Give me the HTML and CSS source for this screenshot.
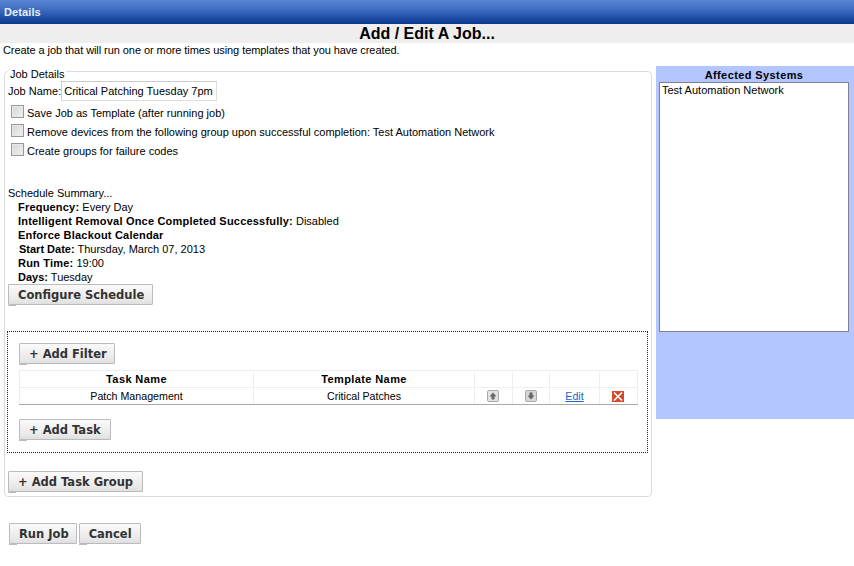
FILE: index.html
```html
<!DOCTYPE html>
<html lang="en">
<head>
<meta charset="utf-8">
<title>Add / Edit A Job</title>
<link rel="stylesheet" href="styles.css">
</head>
<body>
<header class="topbar">Details</header>
<h1 class="title">Add / Edit A Job...</h1>
<p class="intro">Create a job that will run one or more times using templates that you have created.</p>
<div class="columns">
  <main class="main">
    <fieldset class="details">
      <legend><span class="legend-text">Job Details</span></legend>
      <div class="name-row"><label>Job Name:</label><input class="name-input" type="text" value="Critical Patching Tuesday 7pm"></div>
      <div class="check-row"><span class="check"></span>Save Job as Template (after running job)</div>
      <div class="check-row"><span class="check"></span>Remove devices from the following group upon successful completion: Test Automation Network</div>
      <div class="check-row"><span class="check"></span>Create groups for failure codes</div>
      <div class="summary-title">Schedule Summary...</div>
      <div class="summary">
        <div><b>Frequency:</b> Every Day</div>
        <div><b>Intelligent Removal Once Completed Successfully:</b> Disabled</div>
        <div><b>Enforce Blackout Calendar</b></div>
        <div class="nudge tight"><b>Start Date:</b> Thursday, March 07, 2013</div>
        <div><b>Run Time:</b> 19:00</div>
        <div class="tight"><b>Days:</b> Tuesday</div>
      </div>
      <button class="btn" type="button">Configure Schedule</button>
      <section class="tasks">
        <button class="btn btn-filter" type="button">+ Add Filter</button>
        <table class="grid">
          <thead>
            <tr><th class="c1">Task Name</th><th class="c2">Template Name</th><th class="c3"></th><th class="c4"></th><th class="c5"></th><th class="c6"></th></tr>
          </thead>
          <tbody>
            <tr>
              <td>Patch Management</td>
              <td>Critical Patches</td>
              <td class="icon-cell"><svg class="move" viewBox="0 0 12 12"><rect x=".5" y=".5" width="11" height="11" rx="1.5" fill="#e4e4e4" stroke="#a8a8a8"/><path d="M6 2.5 9.5 6.5H7.5V9.5H4.5V6.5H2.5Z" fill="#666"/></svg></td>
              <td><svg class="move" viewBox="0 0 12 12"><rect x=".5" y=".5" width="11" height="11" rx="1.5" fill="#d8d8d8" stroke="#a8a8a8"/><path d="M6 9.5 2.5 5.5H4.5V2.5H7.5V5.5H9.5Z" fill="#666"/></svg></td>
              <td><a class="edit" href="#">Edit</a></td>
              <td class="icon-cell"><svg class="del" viewBox="0 0 12 11"><rect width="12" height="11" fill="#d5492a"/><path d="M2 1.5 10 9.5M10 1.5 2 9.5" stroke="#fff" stroke-width="1.6"/></svg></td>
            </tr>
          </tbody>
        </table>
        <button class="btn btn-wide" type="button">+ Add Task</button>
      </section>
      <button class="btn btn-group btn-wide" type="button">+ Add Task Group</button>
    </fieldset>
    <div class="actions">
      <button class="btn btn-run" type="button">Run Job</button>
      <button class="btn" type="button">Cancel</button>
    </div>
  </main>
  <aside class="side">
    <h2>Affected Systems</h2>
    <div class="list">Test Automation Network</div>
  </aside>
</div>
</body>
</html>
```
FILE: styles.css
```css
* { box-sizing: border-box; }
html, body { margin: 0; padding: 0; }
body { background: #fff; color: #000; font: 11px/14px "Liberation Sans", Arial, sans-serif; height: 566px; overflow: hidden; }
.topbar { height: 24px; padding: 5px 4px 0; color: #e6eefb; font-weight: bold; font-size: 11px; letter-spacing: 0.1px; line-height: 14px; background: linear-gradient(#5a86d6, #3a68bd 45%, #08378f); }
.title { margin: 0; height: 19px; background: #eee; text-align: center; font-size: 16px; line-height: 19px; font-weight: bold; }
.intro { margin: 0; padding: 0 3px; height: 14px; line-height: 14px; letter-spacing: -0.07px; }
.columns { display: flex; align-items: flex-start; margin-top: 9px; }
.main { width: 656px; padding-left: 4px; flex: none; }
.details { margin: -1px 0 0; width: 648px; height: 432px; padding: 0 3px; border: 1px solid #d5dde5; border-radius: 4px; }
.details legend { padding: 0 2px; margin: 0; line-height: 12px; height: 12px; }
.legend-text { position: relative; top: 3px; }
.name-row { display: flex; align-items: center; margin-top: 3px; height: 21px; }
.name-input { width: 156px; height: 20px; padding: 0 2px; border: 1px solid #ddd; border-top-color: #ccc; border-left-color: #ccc; font: 11px "Liberation Sans", Arial, sans-serif; color: #000; }
.check-row { display: flex; align-items: flex-start; height: 19px; padding-left: 3px; padding-top: 5px; }
.check { width: 13px; height: 13px; margin: -1px 3px 0 0; border: 1px solid #999; background: linear-gradient(135deg, #d4d4d4, #f2f2f2); box-shadow: inset 0 0 0 1px #e8e8e8; }
.summary-title { margin-top: 28px; }
.summary { padding-left: 10px; line-height: 14px; }
.summary b { letter-spacing: 0.2px; }
.summary .tight b { letter-spacing: 0; }
.nudge { padding-left: 1px; }
.btn { display: block; position: relative; height: 21px; padding: 1px 8px 0 9px; background: linear-gradient(#fafafa, #e8e8e8 80%, #dedede); border: 1px solid #bbb; border-radius: 1px; font: bold 11.5px/18px "DejaVu Sans", Verdana, sans-serif; color: #333; }
.btn::after { content: ""; position: absolute; left: -1px; bottom: -2px; width: 8px; height: 1px; background: #bbb; }
.btn-wide { padding-right: 9px; }
.btn-run { padding-right: 7px; }
.tasks { margin: 26px 0 0 -1px; width: 641px; height: 122px; border: 1px dotted #12206b; padding: 11px 10px 0 11px; }
.btn-filter { margin-bottom: 6px; padding-right: 7px; }
.grid { width: 618px; border-collapse: collapse; table-layout: fixed; border-bottom: 1px solid #aaa; border-right: 1px solid #aaa; margin-bottom: 14px; }
.grid th, .grid td { border: 1px solid #eee; text-align: center; padding: 0; height: 17px; font-size: 10.67px; line-height: 13px; }
.grid th { font-size: 11px; letter-spacing: 0.4px; }
.grid tbody td { border-bottom: 1px solid #aaa; }
.grid .icon-cell { padding-right: 2px; }
.c1 { width: 234px; } .c2 { width: 221px; } .c3 { width: 38px; } .c4 { width: 37px; } .c5 { width: 50px; } .c6 { width: 38px; }
.move { width: 12px; height: 12px; display: block; margin: 0 auto; }
.del { width: 12px; height: 11px; display: block; margin: 0 auto; }
.edit { color: #1a65c0; }
.btn-group { margin-top: 18px; }
.actions { display: flex; gap: 2px; margin-top: 26px; padding-left: 5px; }
.side { width: 198px; height: 353px; background: #b3c6ff; padding: 3px 5px 0 3px; flex: none; }
.side h2 { margin: 0; text-align: center; font-size: 11px; letter-spacing: 0.4px; line-height: 13px; height: 13px; }
.list { height: 250px; background: #fff; border: 1px solid #808090; padding: 0 2px; line-height: 14px; }
```
